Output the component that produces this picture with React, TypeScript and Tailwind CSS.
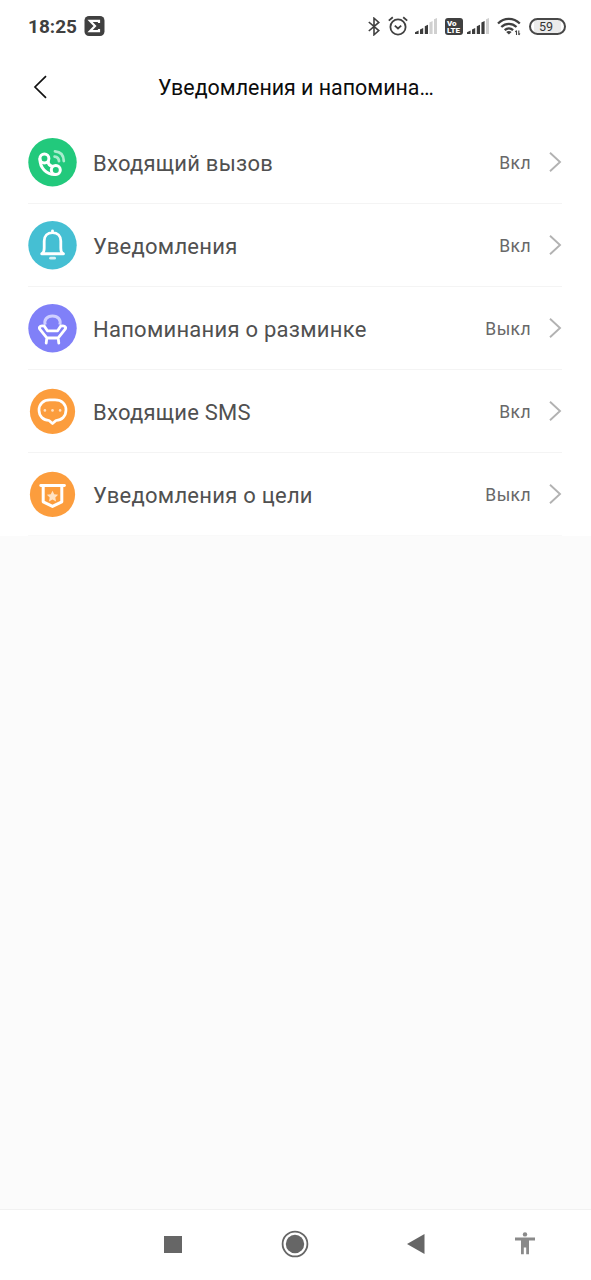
import type { ReactNode } from 'react';

interface SettingRow {
  label: string;
  enabled: boolean;
  icon: ReactNode;
}

function CallIcon() {
  return (
    <svg width="49" height="49" viewBox="0 0 49 49" fill="none">
      <circle cx="24.5" cy="24.2" r="24.2" fill="#22c97c" />
      <g stroke="#fff" strokeWidth="3" strokeLinecap="round">
        <circle cx="16.4" cy="20.4" r="4.5" />
        <circle cx="27.8" cy="32" r="4.5" />
        <path d="M11.9 21C11.9 29.5 18 36.6 27 36.6" />
        <path d="M20.2 23.6C20.2 26 21.8 27.8 24.3 28.2" />
      </g>
      <g stroke="#a9ecce" strokeWidth="2.8" strokeLinecap="round">
        <path d="M27 13.4C32.4 13.7 35.6 17.3 35.8 23" />
        <path d="M26.6 18.6C29.2 18.8 30.8 20.5 31 23.1" />
      </g>
    </svg>
  );
}

function BellIcon() {
  return (
    <svg width="49" height="49" viewBox="0 0 49 49" fill="none">
      <circle cx="24.5" cy="24.2" r="24.2" fill="#45bfd3" />
      <path
        d="M14.6 32.2C15.8 31.2 16.2 29.6 16.2 27V20C16.2 15 19.4 11.6 24.5 11.6S32.8 15 32.8 20V27C32.8 29.6 33.2 31.2 34.4 32.2M24.5 11.5V9.8"
        stroke="#fff"
        strokeWidth="2.8"
        strokeLinecap="round"
      />
      <path d="M13.8 32.8H35.4" stroke="#fff" strokeWidth="3" strokeLinecap="round" />
      <path d="M22.6 37.2H26.6" stroke="#d5f1f5" strokeWidth="2.8" strokeLinecap="round" />
    </svg>
  );
}

function ChairIcon() {
  return (
    <svg width="49" height="49" viewBox="0 0 49 49" fill="none">
      <circle cx="24.5" cy="24.2" r="24.2" fill="#8080f8" />
      <path d="M17.2 20.8C15.7 16 19 11.9 24.5 11.9S33.3 16 31.8 20.8" stroke="#cfcfff" strokeWidth="3" />
      <path
        d="M18.2 39.2L18.8 33.8L11.8 25.2C10.4 22.8 13 21.2 16.4 22.2L19.4 26.8H29.6L32.6 22.2C36 21.2 38.6 22.8 37.2 25.2L30.2 33.8L30.8 39.2M18.8 34H30.2"
        stroke="#fff"
        strokeWidth="2.8"
        strokeLinecap="round"
        strokeLinejoin="round"
      />
    </svg>
  );
}

function SmsIcon() {
  return (
    <svg width="49" height="49" viewBox="0 0 49 49" fill="none">
      <circle cx="24.5" cy="24.4" r="22.6" fill="#fc9d3d" />
      <path
        d="M22 12.9H27C33.8 12.9 38 17 38 23.1S33.8 33.3 28 33.5L24.5 36.6L21 33.5C15.2 33.3 11 29.2 11 23.1S15.2 12.9 22 12.9Z"
        stroke="#fff"
        strokeWidth="2.7"
        strokeLinejoin="round"
      />
      <g fill="#ffe0c0">
        <circle cx="16.9" cy="23.4" r="1.3" />
        <circle cx="24.5" cy="23.4" r="1.3" />
        <circle cx="32.1" cy="23.4" r="1.3" />
      </g>
    </svg>
  );
}

function GoalIcon() {
  return (
    <svg width="49" height="49" viewBox="0 0 49 49" fill="none">
      <circle cx="24.5" cy="24.4" r="22.6" fill="#fc9d3d" />
      <path d="M12.8 15.5H36.4" stroke="#fff" strokeWidth="2.9" strokeLinecap="round" />
      <path d="M15.2 15.5V31.8L24.5 36.4L33.8 31.8V15.5" stroke="#fff" strokeWidth="3" strokeLinejoin="round" />
      <path
        d="M24.5 20.8L26.2 24.3L30.1 24.8L27.3 27.5L28 31.4L24.5 29.6L21 31.4L21.7 27.5L18.9 24.8L22.8 24.3Z"
        fill="#ffe2c4"
      />
    </svg>
  );
}

const rows: SettingRow[] = [
  { label: 'Входящий вызов', enabled: true, icon: <CallIcon /> },
  { label: 'Уведомления', enabled: true, icon: <BellIcon /> },
  { label: 'Напоминания о разминке', enabled: false, icon: <ChairIcon /> },
  { label: 'Входящие SMS', enabled: true, icon: <SmsIcon /> },
  { label: 'Уведомления о цели', enabled: false, icon: <GoalIcon /> },
];

const bars = [
  'M0 16V14.2L3.6 12.6V16Z',
  'M5 16V11.4L8.2 10V16Z',
  'M9.8 16V8.2L13 6.8V16Z',
  'M14.4 16V4.4L17.6 3V16Z',
  'M19 16V1.2L22 0V16Z',
];

function SignalBars({ level }: { level: number }) {
  return (
    <svg width="22" height="17" viewBox="0 0 22 17">
      {bars.map((d, i) => (
        <path key={d} d={d} fill={i < level ? '#3c3c3c' : '#d0d0d0'} />
      ))}
    </svg>
  );
}

function StatusBar() {
  return (
    <div className="flex h-[53px] items-center pl-7 pr-[25px] text-[#404040]">
      <span className="mt-px w-[49px] text-[19px] font-bold">18:25</span>
      <svg className="-mt-px ml-[7px]" width="21" height="20" viewBox="0 0 21 20">
        <rect x="0.5" width="20" height="20" rx="4.5" fill="#404040" />
        <path d="M15 7V4.8H6L11 10L6 15.2H15V13" fill="none" stroke="#fff" strokeWidth="2.2" />
      </svg>

      <div className="ml-auto flex items-center">
        <svg width="12" height="19" viewBox="0 0 12 19" fill="none" stroke="#404040" strokeWidth="1.6">
          <path d="M0.8 5L10.8 13.6L6 17.8V1.2L10.8 5.4L0.8 14" />
        </svg>
        <svg className="-mt-0.5 ml-2" width="20" height="20" viewBox="0 0 20 20" fill="none" stroke="#404040" strokeWidth="1.8">
          <circle cx="10" cy="11" r="7.6" />
          <path d="M6.8 9.6L10 12.5L13.2 9.6M0.8 4.6L4.8 1.2M19.2 4.6L15.2 1.2" />
        </svg>
        <div className="ml-[7px] flex">
          <SignalBars level={3} />
        </div>
        <div className="ml-2 flex h-[17px] w-[18px] flex-col justify-center rounded-[3px] bg-[#404040] pl-[2px] text-[8px] font-black leading-[7px] text-white">
          <span>Vo</span>
          <span>LTE</span>
        </div>
        <div className="ml-1 flex">
          <SignalBars level={4} />
        </div>
        <svg className="ml-2" width="25" height="19" viewBox="0 0 25 19" fill="none">
          <g stroke="#404040" strokeWidth="2.3">
            <path d="M1 6.5C7.2 0.4 16.4 0.4 22.8 6.5" />
            <path d="M4.3 10C8.7 5.8 15 5.8 19.5 10" />
            <path d="M7.7 13.2C10.2 10.9 13.6 10.9 16.1 13.2" />
          </g>
          <path d="M9.2 15C10.8 13.7 13 13.7 14.6 15L11.9 17.6Z" fill="#404040" />
          <path d="M19.5 13.5V18M21.8 13.5V18M18.3 15L19.5 13.5M23 16.5L21.8 18" stroke="#404040" strokeWidth="1.1" />
        </svg>
        <div className="ml-[7px] flex h-[17px] w-[37px] items-center justify-center rounded-full border-2 border-[#484848] bg-[linear-gradient(90deg,#fff_8%,#ebebeb_8%_92%,#fff_92%)] pr-[3px] pt-px text-[12.5px] leading-none text-[#333]">
          59
        </div>
      </div>
    </div>
  );
}

function NavBar() {
  return (
    <nav className="flex h-[71px] items-center border-t border-[#f1f1f1] bg-white pb-[2px] pl-[164px]">
      <div className="h-[17px] w-[18px] bg-[#666]" />
      <svg className="ml-[99px]" width="28" height="28" viewBox="0 0 28 28">
        <circle cx="14" cy="14" r="12.4" fill="none" stroke="#666" strokeWidth="1.8" />
        <circle cx="14" cy="14" r="9.2" fill="#666" />
      </svg>
      <svg className="ml-[98px]" width="18" height="20" viewBox="0 0 18 20">
        <path d="M0 10L17.5 0V20Z" fill="#666" />
      </svg>
      <svg className="-mt-0.5 ml-[90px]" width="20" height="23" viewBox="0 0 20 23" fill="#8a8a8a">
        <circle cx="10" cy="2.4" r="2.2" />
        <path d="M0 5.6H20V8.4H14V22.2H11.2V15.4H8.8V22.2H6V8.4H0Z" />
      </svg>
    </nav>
  );
}

export default function App() {
  return (
    <div className="flex h-[1280px] w-[591px] flex-col overflow-hidden bg-[#fbfbfb] font-['Roboto',sans-serif]">
      <div className="bg-white">
        <StatusBar />

        <header className="flex h-[68px] items-center pl-[33px]">
          <svg width="15" height="24" viewBox="0 0 15 24" fill="none" stroke="#111" strokeWidth="1.7">
            <path d="M13 1.2L2 12L13 22.8" />
          </svg>
          <h1 className="ml-[110px] pt-0.5 text-[21.4px] text-[#0c0c0c]">Уведомления и напомина…</h1>
        </header>

        <ul className="pl-7 pr-[29px]">
          {rows.map((row) => (
            <li key={row.label} className="flex h-[83px] items-center border-b border-[#f4f4f4] last:border-[#f9f9f9]">
              {row.icon}
              <span className="ml-4 pt-0.5 text-[22px] tracking-[0.25px] text-[#505050]">{row.label}</span>
              <span className="ml-auto pt-[3px] text-[17.5px] tracking-[0.4px] text-[#686868]">
                {row.enabled ? 'Вкл' : 'Выкл'}
              </span>
              <svg className="ml-[17px]" width="14" height="20" viewBox="0 0 14 20" fill="none" stroke="#b2b2b2" strokeWidth="1.9">
                <path d="M2 0.8L12 10L2 19.2" />
              </svg>
            </li>
          ))}
        </ul>
      </div>

      <div className="flex-1" />
      <NavBar />
    </div>
  );
}
